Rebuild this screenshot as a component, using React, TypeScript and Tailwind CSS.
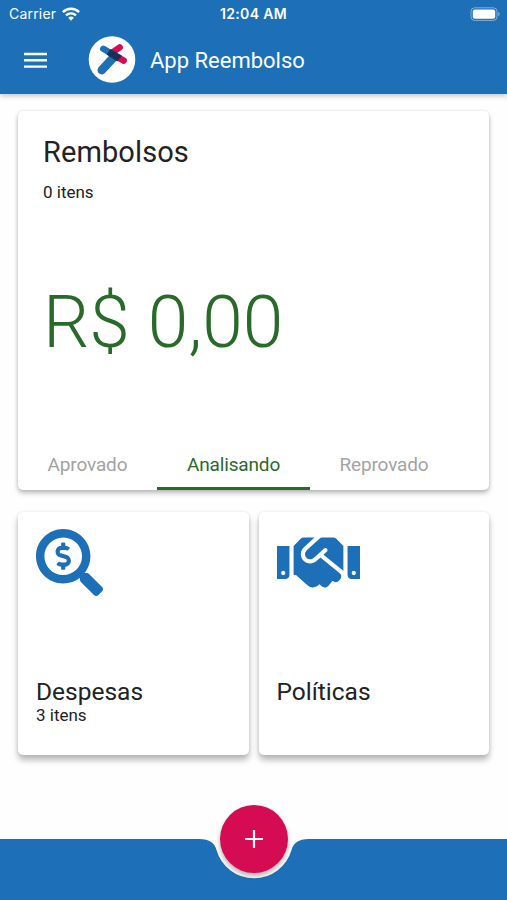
import { FaHandshake, FaSearchDollar } from 'react-icons/fa';

const tabs = [
  { label: 'Aprovado', active: false, className: 'w-[139px]' },
  { label: 'Analisando', active: true, className: 'w-[153px]' },
  { label: 'Reprovado', active: false, className: 'w-[148px]' },
];

const StatusBar = () => (
  <div className="grid h-[27px] grid-cols-3 items-center px-[9px] font-[Inter,sans-serif] text-[13px] text-white">
    <div className="flex items-center gap-[6px]">
      <span className="text-[14px] leading-none tracking-[0.2px]">Carrier</span>
      <svg width="18" height="14" viewBox="0 0 18 14" fill="none" stroke="#fff" strokeWidth="2.4">
        <path d="M.9 5.1a11.5 11.5 0 0 1 16.2 0" />
        <path d="M4 8.4a7.1 7.1 0 0 1 10 0" />
        <path d="M9 13.7 6.2 10.8a4 4 0 0 1 5.6 0Z" fill="#fff" stroke="none" />
      </svg>
    </div>
    <span className="whitespace-nowrap text-center text-[14px] font-semibold leading-none tracking-[0.35px]">12:04 AM</span>
    <div className="flex justify-end">
      <svg width="31" height="14" viewBox="0 0 31 14" className="-mr-[3px]">
        <rect x="1" y="0.8" width="26" height="12.6" rx="3.6" fill="none" stroke="#fff" strokeOpacity=".45" />
        <rect x="2.8" y="2.5" width="22.4" height="9.2" rx="2" fill="#fff" />
        <path d="M28.3 5v4.2c1.8-.7 1.8-3.5 0-4.2Z" fill="#fff" fillOpacity=".5" />
      </svg>
    </div>
  </div>
);

const Logo = () => (
  <svg width="48" height="48" viewBox="0 0 48 48" className="ml-[41px]">
    <circle cx="24" cy="23.5" r="23.3" fill="#fff" />
    <g fill="none" strokeLinecap="round">
      <path d="M31.7 11.3 25 16" stroke="#dc0a55" strokeWidth="6.4" />
      <path d="M24.5 22.5 13.8 34.2" stroke="#1d70b7" strokeWidth="8.6" />
      <path d="M15.3 12.8 24 18" stroke="#1d70b7" strokeWidth="6.4" />
      <path d="M28 20.3 35.7 24.6" stroke="#dc0a55" strokeWidth="6.4" />
    </g>
    <path d="M22.6 13 34 19.8 29.2 25.5 18.6 18.6Z" fill="#17305a" />
  </svg>
);

const Header = () => (
  <header className="h-[94px] bg-[#1d70b7] shadow-[0_2px_5px_rgba(0,0,0,0.22)]">
    <StatusBar />
    <div className="flex h-[66px] items-center pl-6">
      <svg width="23" height="17" viewBox="0 0 23 17" fill="#fff">
        <path d="M0 .8h23v2.4H0zM0 7.1h23v2.4H0zM0 13.4h23v2.4H0z" />
      </svg>
      <Logo />
      <h1 className="ml-[14px] pt-[2px] text-[22px] leading-none text-white">App Reembolso</h1>
    </div>
  </header>
);

const App = () => {
  return (
    <div className="flex h-[900px] w-[507px] flex-col overflow-hidden bg-[#fefefe] font-[Roboto,sans-serif] text-[#222]">
      <Header />

      <main className="flex flex-1 flex-col px-[18px] pt-[17px]">
        <section className="flex h-[379px] flex-col rounded-[5px] bg-white shadow-[0_3px_5px_rgba(0,0,0,0.27),0_0_3px_rgba(0,0,0,0.1)]">
          <div className="px-[25px] pt-[23px]">
            <h2 className="text-[29px] leading-[36px] tracking-[0.1px]">Rembolsos</h2>
            <p className="mt-[12px] text-[17px] leading-[20px]">0 itens</p>
          </div>
          <p className="mt-[76px] pl-[25px] text-[73px] font-light leading-[88px] text-[#296a2b]">R$ 0,00</p>

          {/* Status tabs */}
          <div className="mt-auto flex h-[51px]">
            {tabs.map((tab) => (
              <button
                key={tab.label}
                className={`${tab.className} text-[19px] leading-[51px] tracking-[-0.15px] ${
                  tab.active
                    ? 'border-b-[3px] border-[#296a2b] text-[#296a2b]'
                    : 'border-b-[3px] border-transparent text-[#a3a3a3]'
                }`}
              >
                {tab.label}
              </button>
            ))}
          </div>
        </section>

        <div className="mt-[22px] grid grid-cols-2 gap-[10px]">
          <section className="flex h-[243px] flex-col rounded-[5px] bg-white px-[18px] pt-[17px] shadow-[0_5px_6px_rgba(0,0,0,0.28),0_0_3px_rgba(0,0,0,0.1)]">
            <FaSearchDollar className="size-[67px] text-[#1d70b7]" />
            <h3 className="mt-[83px] text-[24.5px] leading-[26px]">Despesas</h3>
            <p className="text-[17px] leading-[20px]">3 itens</p>
          </section>
          <section className="flex h-[243px] flex-col rounded-[5px] bg-white px-[18px] pt-[17px] shadow-[0_5px_6px_rgba(0,0,0,0.28),0_0_3px_rgba(0,0,0,0.1)]">
            <FaHandshake className="h-[67px] w-[83px] text-[#1d70b7]" />
            <h3 className="mt-[83px] text-[24.5px] leading-[26px]">Políticas</h3>
          </section>
        </div>
      </main>

      {/* Bottom bar with the notch for the add button */}
      <footer className="relative h-[61px]">
        <svg width="507" height="61" viewBox="0 0 507 61" className="block">
          <path
            d="M0 0H199C210 0 214.5 4 216.5 11A39 39 0 0 0 291.5 11C293.5 4 298 0 309 0H507V61H0Z"
            fill="#1d70b7"
          />
        </svg>
        <button className="absolute left-[220px] top-[-34px] flex size-[68px] items-center justify-center rounded-full bg-[#d60c53] shadow-[0_3px_5px_rgba(0,0,0,0.3)]">
          <svg width="18" height="18" viewBox="0 0 18 18" stroke="#fff" strokeWidth="2.2">
            <path d="M9 0v18M0 9h18" />
          </svg>
        </button>
      </footer>
    </div>
  );
};

export default App;
